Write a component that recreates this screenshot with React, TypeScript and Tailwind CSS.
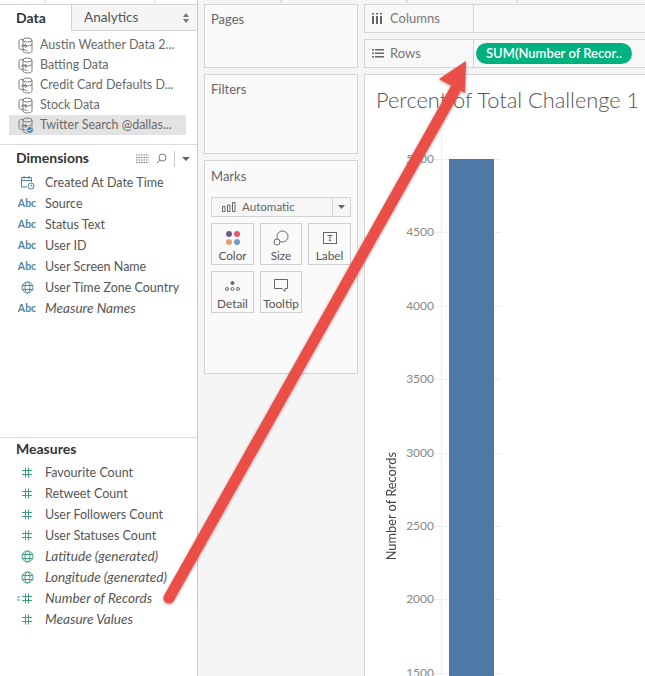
const sans = "font-['Lato','Open_Sans',sans-serif]";

function SourceIcon({ badge = false }: { badge?: boolean }) {
  return (
    <svg width="16" height="17" viewBox="0 0 16 17" fill="none" stroke="#7a7a7a" strokeWidth="1" className="shrink-0">
      <ellipse cx="9.5" cy="3" rx="4.5" ry="2" />
      <path d="M5 3v11c0 1.1 2 2 4.5 2s4.5-.9 4.5-2V3" />
      <path d="M5 7.5c1 1 3 1.5 4.5 1.5s3.5-.5 4.5-1.5M5 12c1 1 3 1.5 4.5 1.5" />
      <path d="M5 2.5c-2-.5-4 .5-4 1.5v7c0 1 2 1.5 4 1.5" />
      <path d="M3 9h6M7 7l2 2-2 2" />
      {badge && (
        <>
          <circle cx="12" cy="13" r="3.5" fill="#3a85ad" stroke="#e3e3e3" />
          <path d="M10.5 13l1 1 2-2" stroke="#fff" />
        </>
      )}
    </svg>
  );
}

function Abc() {
  return <span className="text-[10.5px] font-bold leading-none text-[#4f86a3]">Abc</span>;
}

function Globe({ color }: { color: string }) {
  return (
    <svg width="13" height="13" viewBox="0 0 13 13" fill="none" stroke={color} strokeWidth="1">
      <circle cx="6.5" cy="6.5" r="5.5" />
      <ellipse cx="6.5" cy="6.5" rx="2.5" ry="5.5" />
      <path d="M1 4.5h11M1 8.5h11" />
    </svg>
  );
}

function Hash({ calc = false }: { calc?: boolean }) {
  return (
    <svg width="24" height="13" viewBox="0 0 24 13" fill="none" stroke="#3f9f80" strokeWidth="1">
      <path d="M10.5 1.5v10M13.5 1.5v10M7 4.5h10M7 8.5h10" />
      {calc && <path d="M2 5h3M2 8h3" />}
    </svg>
  );
}

function CalendarIcon() {
  return (
    <svg width="15" height="15" viewBox="0 0 15 15" fill="none" stroke="#4f86a3" strokeWidth="1">
      <path d="M7 12H1.5V2.5h10V7M1.5 5.5h10M4 1v3M9 1v3" />
      <circle cx="11" cy="11" r="3" fill="#fff" />
      <path d="M11 9.5V11h1.5" />
    </svg>
  );
}

function FieldRow({ icon, label, italic }: { icon: React.ReactNode; label: string; italic?: boolean }) {
  return (
    <div className="flex h-[21px] items-center pl-[15px]">
      <span className="flex w-[24px] justify-center">{icon}</span>
      <span className={`ml-[6px] whitespace-nowrap text-[#555] ${italic ? "text-[13.6px] italic" : "pt-[2px] text-[12.5px]"}`}>{label}</span>
    </div>
  );
}

function MarkCard({ icon, label }: { icon: React.ReactNode; label: string }) {
  return (
    <div className="flex h-[42px] flex-col items-center border border-[#d0d0d0] bg-[#fafafa]">
      <div className="flex h-[24px] items-center pt-1">{icon}</div>
      <span className="text-[11.8px] leading-[15px] text-[#555]">{label}</span>
    </div>
  );
}

const sources = ["Austin Weather Data 2...", "Batting Data", "Credit Card Defaults D...", "Stock Data"];
const ticks = ["5000", "4500", "4000", "3500", "3000", "2500", "2000", "1500"];

export default function App() {
  return (
    <div className={`relative flex h-[676px] w-[645px] overflow-hidden bg-[#f5f5f5] ${sans}`}>
      {/* left data pane */}
      <aside className="flex h-full w-[198px] shrink-0 flex-col border-r border-[#c8c8c8] bg-white pt-[4px]">
        <div className="flex h-[27px] shrink-0 border-t border-[#d4d4d4]">
          <div className="flex w-[71px] items-center pb-[2px] pl-4 text-[14px] font-bold text-[#333]">Data</div>
          <div className="flex flex-1 items-center justify-between border-b border-l border-[#d4d4d4] bg-[#f5f5f5] pl-3 pr-2 text-[13.6px] text-[#555]">
            Analytics
            <svg width="6" height="10" viewBox="0 0 6 10" fill="#777">
              <path d="M3 0l3 4H0zM3 10l3-4H0z" />
            </svg>
          </div>
        </div>
        <div className="flex h-[114px] shrink-0 flex-col border-b border-[#dcdcdc] pt-[4px]">
          {sources.map((s) => (
            <div key={s} className="flex h-[20px] items-center pl-[18px]">
              <SourceIcon />
              <span className="ml-[6px] whitespace-nowrap text-[12.5px] text-[#6a6a6a]">{s}</span>
            </div>
          ))}
          <div className="ml-[9px] mr-[11px] flex h-[20px] items-center bg-[#e3e3e3] pl-[9px]">
            <SourceIcon badge />
            <span className="ml-[6px] whitespace-nowrap text-[12.5px] text-[#6a6a6a]">Twitter Search @dallas...</span>
          </div>
        </div>
        <div className="flex h-[293px] shrink-0 flex-col border-b border-[#dcdcdc]">
          <div className="flex h-[27px] items-center justify-between pl-4 pr-[7px]">
            <span className="-mt-[2px] text-[14px] font-bold text-[#333]">Dimensions</span>
            <div className="flex items-center gap-[7px]">
              <svg width="13" height="10" viewBox="0 0 13 10" stroke="#777" strokeDasharray="1.5 1">
                <path d="M0 1h13M0 3.5h13M0 6h13M0 8.5h13" />
              </svg>
              <svg width="11" height="11" viewBox="0 0 11 11" fill="none" stroke="#777">
                <circle cx="6.5" cy="4.5" r="3.5" />
                <path d="M4 7 1 10" />
              </svg>
              <span className="h-[16px] w-px bg-[#ccc]" />
              <svg width="8" height="4" viewBox="0 0 8 4" fill="#666">
                <path d="M0 0h8L4 4z" />
              </svg>
            </div>
          </div>
          <FieldRow icon={<CalendarIcon />} label="Created At Date Time" />
          <FieldRow icon={<Abc />} label="Source" />
          <FieldRow icon={<Abc />} label="Status Text" />
          <FieldRow icon={<Abc />} label="User ID" />
          <FieldRow icon={<Abc />} label="User Screen Name" />
          <FieldRow icon={<Globe color="#4f86a3" />} label="User Time Zone Country" />
          <FieldRow icon={<Abc />} label="Measure Names" italic />
        </div>
        <div className="flex flex-1 flex-col">
          <div className="flex h-[24px] items-center pb-[3px] pl-4 text-[14px] font-bold text-[#333]">Measures</div>
          <FieldRow icon={<Hash />} label="Favourite Count" />
          <FieldRow icon={<Hash />} label="Retweet Count" />
          <FieldRow icon={<Hash />} label="User Followers Count" />
          <FieldRow icon={<Hash />} label="User Statuses Count" />
          <FieldRow icon={<Globe color="#3f9f80" />} label="Latitude (generated)" italic />
          <FieldRow icon={<Globe color="#3f9f80" />} label="Longitude (generated)" italic />
          <FieldRow icon={<Hash calc />} label="Number of Records" italic />
          <FieldRow icon={<Hash />} label="Measure Values" italic />
        </div>
      </aside>

      {/* cards column */}
      <div className="flex w-[166px] shrink-0 flex-col px-[6px] pt-[4px]">
        <div className="h-[64px] shrink-0 border border-[#d4d4d4] bg-[#fafafa] pl-[6px] pt-[5px] text-[13px] text-[#666]">Pages</div>
        <div className="mt-[6px] h-[80px] shrink-0 border border-[#d4d4d4] bg-[#fafafa] pl-[6px] pt-[5px] text-[13px] text-[#666]">Filters</div>
        <div className="mt-[6px] flex h-[214px] shrink-0 flex-col border border-[#d4d4d4] bg-[#fafafa] px-[6px] pt-[7px]">
          <span className="text-[13px] leading-[17px] text-[#666]">Marks</span>
          <div className="mt-[12px] flex h-[20px] items-center border border-[#d4d4d4] bg-[#f6f6f6]">
            <div className="flex flex-1 items-center pl-[10px] text-[11.6px] text-[#666]">
              <svg width="14" height="10" viewBox="0 0 14 10" fill="none" stroke="#666" className="mr-[6px]">
                <path d="M.5 4.5h2.5v5H.5zM5.5 3h2.5v6.5H5.5zM10.5 .5h2.500v9h-2.500z" />
              </svg>
              Automatic
            </div>
            <div className="flex h-full w-[18px] items-center justify-center border-l border-[#d4d4d4]">
              <svg width="7" height="4" viewBox="0 0 7 4" fill="#666">
                <path d="M0 0h7L3.5 4z" />
              </svg>
            </div>
          </div>
          <div className="mt-[6px] grid grid-cols-[43px_42px_43px] gap-[6px]">
            <MarkCard
              label="Color"
              icon={
                <svg width="16" height="16" viewBox="0 0 16 16">
                  <circle cx="4" cy="4" r="3" fill="#6f5a8e" />
                  <circle cx="12" cy="4" r="3" fill="#e8596b" />
                  <circle cx="4" cy="12" r="3" fill="#e9a06f" />
                  <circle cx="12" cy="12" r="3" fill="#6f9bc6" />
                </svg>
              }
            />
            <MarkCard
              label="Size"
              icon={
                <svg width="16" height="16" viewBox="0 0 16 16" fill="none" stroke="#666">
                  <circle cx="9.5" cy="6.5" r="5.5" />
                  <circle cx="4" cy="12" r="3" fill="#fafafa" />
                </svg>
              }
            />
            <MarkCard
              label="Label"
              icon={
                <svg width="14" height="12" viewBox="0 0 14 12" fill="none" stroke="#666">
                  <rect x=".5" y=".5" width="13" height="11" />
                  <path d="M4.5 3.5h5M7 3.5v5M6 8.5h2" />
                </svg>
              }
            />
            <MarkCard
              label="Detail"
              icon={
                <svg width="15" height="11" viewBox="0 0 15 11" fill="none" stroke="#666">
                  <circle cx="7.5" cy="2" r="1.5" fill="#666" />
                  <circle cx="2" cy="8" r="1.5" />
                  <circle cx="7.5" cy="8" r="1.5" />
                  <circle cx="13" cy="8" r="1.5" />
                </svg>
              }
            />
            <MarkCard
              label="Tooltip"
              icon={
                <svg width="14" height="14" viewBox="0 0 14 14" fill="none" stroke="#666">
                  <path d="M.5.5h13v9h-2.500v3l-3-3H.5z" />
                </svg>
              }
            />
          </div>
        </div>
      </div>

      {/* view area */}
      <div className="flex flex-1 flex-col pt-[4px]">
        <div className="flex h-[29px] shrink-0 border-y border-l border-[#d4d4d4] bg-[#f8f8f8]">
          <div className="flex w-[109px] items-center border-r border-[#d4d4d4] pl-[7px] text-[13px] text-[#777]">
            <svg width="11" height="11" viewBox="0 0 11 11" fill="#666" className="mr-[7px]">
              <path d="M0 3h2v8H0zM4 3h2v8H4zM8 3h2v8H8zM0 0h2v1.5H0zM4 0h2v1.5H4zM8 0h2v1.5H8z" />
            </svg>
            Columns
          </div>
        </div>
        <div className="mt-[6px] flex h-[29px] shrink-0 border-y border-l border-[#d4d4d4] bg-[#f8f8f8]">
          <div className="flex w-[109px] items-center border-r border-[#d4d4d4] pl-[7px] text-[13px] text-[#777]">
            <svg width="12" height="9" viewBox="0 0 12 9" fill="#666" className="mr-[6px]">
              <path d="M0 0h2v1.5H0zM3 0h9v1.5H3zM0 3.5h2V5H0zM3 3.5h9V5H3zM0 7h2v1.5H0zM3 7h9v1.5H3z" />
            </svg>
            Rows
          </div>
          <div className="flex items-center pl-[2px]">
            <span className="flex h-[21px] w-[156px] items-center justify-center rounded-full bg-[#00b180] text-[13px] font-semibold text-white">
              SUM(Number of Recor..
            </span>
          </div>
        </div>
        <div className="mt-[6px] flex min-h-0 flex-1 flex-col overflow-hidden border-l border-t border-[#d4d4d4] bg-white pl-[11px]">
          <div className="mt-[11px] h-[27px] shrink-0 whitespace-nowrap text-[21.8px] font-light leading-[27px] text-[#555]">
            Percent of Total Challenge 1
          </div>
          <div className="relative mt-[46px] flex min-h-0 flex-1 flex-col">
            <span className="absolute left-[8px] top-[293px] rotate-180 whitespace-nowrap text-[12.8px] leading-[14px] text-[#444] [writing-mode:vertical-rl]">
              Number of Records
            </span>
            <div className="absolute bottom-0 left-[65px] top-[-45px] w-px bg-[#eee]" />
            {ticks.map((t) => (
              <div key={t} className="flex h-[73.4px] shrink-0 items-start">
                <span className="-mt-[8px] w-[58px] text-right text-[12px] leading-[16px] text-[#888]">{t}</span>
                <span className="h-px w-[67px] bg-[#eee]" />
              </div>
            ))}
            <div className="absolute bottom-0 left-[73px] top-0 w-[45px] bg-[#4e79a7]" />
          </div>
        </div>
      </div>

      {/* annotation arrow laid over the screenshot */}
      <svg className="pointer-events-none absolute inset-0" width="645" height="676" viewBox="0 0 645 676">
        <defs>
          <filter id="shade" x="-20%" y="-20%" width="140%" height="140%">
            <feDropShadow dx="0" dy="1" stdDeviation="1.5" floodColor="#000" floodOpacity="0.4" />
          </filter>
        </defs>
        <g filter="url(#shade)">
          <path d="M169 598 L455 90" stroke="#eb4d46" strokeWidth="11" strokeLinecap="round" fill="none" />
          <path d="M466 61 L439 79 L465 93 Z" fill="#eb4d46" />
        </g>
        <path d="M45 0v3M155 0v3M281 0v3M407 0v3M517 0v3" stroke="#ccc" />
      </svg>
    </div>
  );
}
